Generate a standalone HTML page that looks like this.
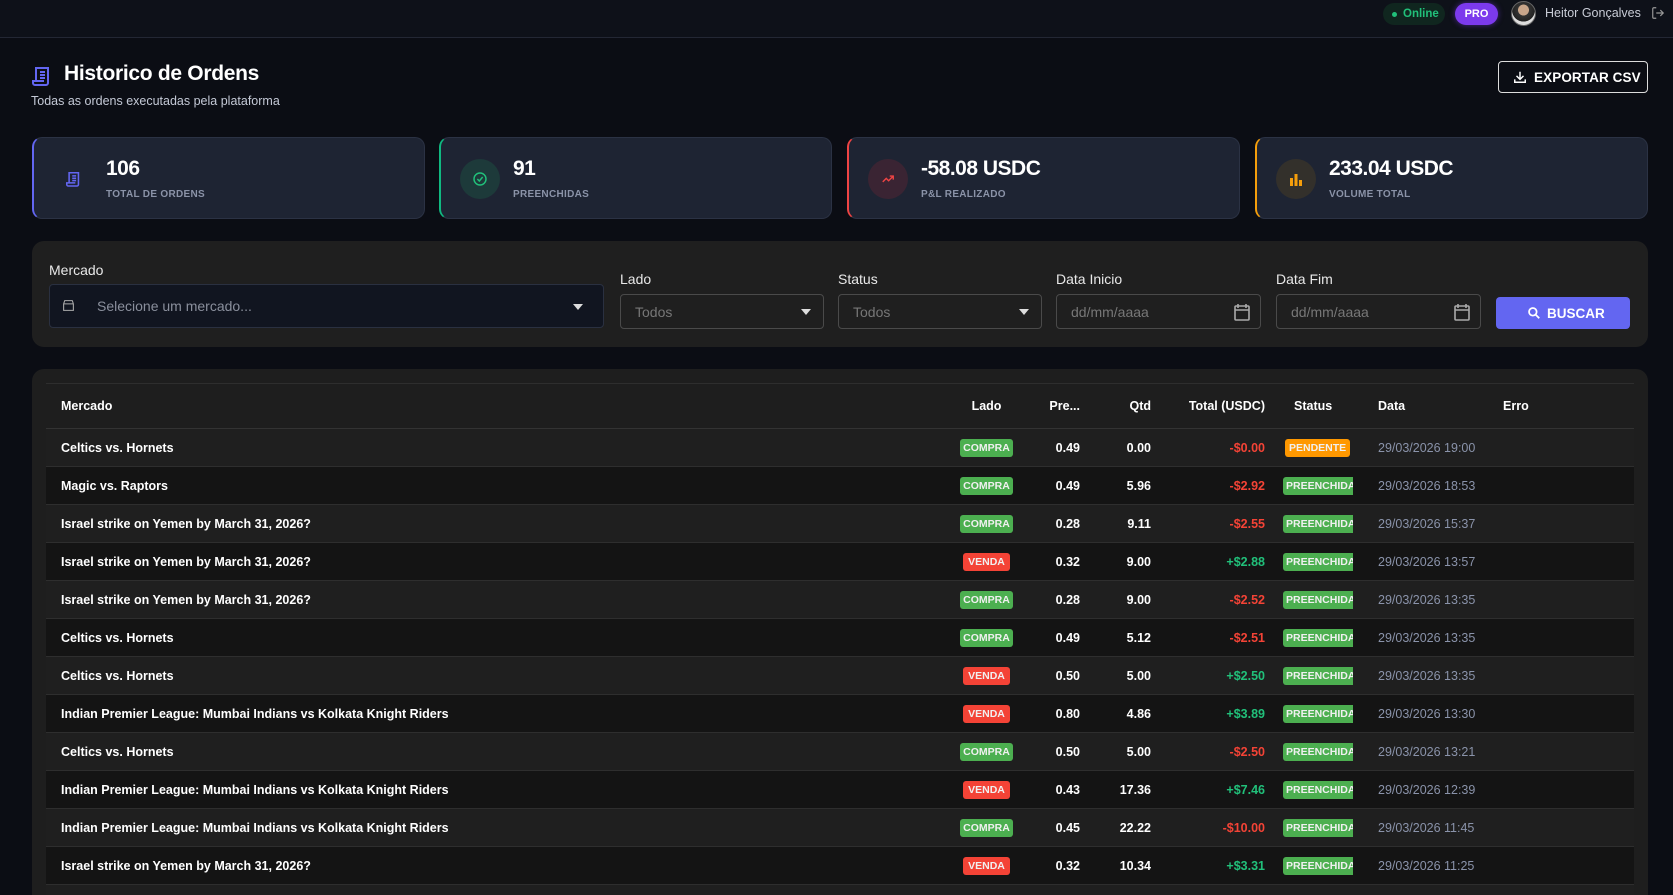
<!DOCTYPE html>
<html style="width:1673px;height:895px;overflow:hidden"><head><meta charset="utf-8"><style>
*{box-sizing:border-box;margin:0;padding:0}
body{width:1673px;height:895px;overflow:hidden;background:#0b0d14;font-family:"Liberation Sans",sans-serif;color:#fff;position:relative}
.top{position:absolute;left:0;top:0;width:1673px;height:38px;background:#0e1119;border-bottom:1px solid #232734}
.abs{position:absolute}
.card{position:absolute;top:137px;height:82px;width:393px;background:#1e2433;border:1px solid #2b3244;border-radius:10px}
.card .ic{position:absolute;left:19px;top:21px;width:40px;height:40px;border-radius:50%;display:flex;align-items:center;justify-content:center}
.card .v{position:absolute;left:72px;top:19px;font-size:21px;font-weight:bold;letter-spacing:-0.5px}
.card .l{position:absolute;left:72px;top:51px;font-size:10px;font-weight:bold;color:#8b93a8;letter-spacing:.3px}
.lab{position:absolute;font-size:14px;color:#e8e8e8}
.sel{position:absolute;height:35px;border:1px solid #4a4a4a;border-radius:4px;font-size:14px;color:#777;padding:9px 14px}
.tri{position:absolute;right:12px;top:14px;border-left:5px solid transparent;border-right:5px solid transparent;border-top:6px solid #ddd}
.panel{position:absolute;left:32px;top:369px;width:1616px;height:526px;background:#1e1e1e;border-radius:12px 12px 0 0;overflow:hidden}
table{position:absolute;left:14px;top:14px;width:1588px;border-collapse:collapse;font-size:13px;table-layout:fixed}
th{height:45px;text-align:left;font-weight:bold;font-size:12.5px;color:#fff;border-top:1px solid #2e2e2e;border-bottom:1px solid #333}
td{height:38px;border-bottom:1px solid #2e2e2e;font-weight:bold;font-size:12.5px;white-space:nowrap;overflow:hidden}
tr.o td{background:#1f1f1f}tr.e td{background:#141414}
thead tr th{background:#1e1e1e}
.b{display:inline-block;font-size:10.5px;font-weight:bold;padding:3px 3px;border-radius:3px;color:#f0f0f0}
.c{background:#4caf50}.vd{background:#f44336;padding:3px 5px}
.p{background:#ff9800;padding:3px 4px}
.f{background:#4caf50;width:70px;overflow:hidden;white-space:nowrap;border-radius:3px 0 0 3px;vertical-align:middle}
.r{text-align:right}.red{color:#f44336}.grn{color:#21c07a}
.dt{color:#8a93aa;font-weight:normal}
</style></head><body>
<div class="top"></div>
<div class="abs" style="left:1383px;top:3px;width:62px;height:22px;border-radius:11px;background:#10261f;color:#21c07a;font-size:11.5px;font-weight:bold;padding:5px 0 0 20px"><span style="position:absolute;left:9px;top:9px;width:5px;height:5px;border-radius:50%;background:#21c07a"></span>Online</div>
<div class="abs" style="left:1455px;top:3px;width:43px;height:22px;border-radius:11px;background:#7c3aed;font-size:11px;font-weight:bold;text-align:center;padding-top:5px;box-shadow:0 0 6px #7c3aed88">PRO</div>
<div class="abs" style="left:1511px;top:1px;width:25px;height:25px;border-radius:50%;background:radial-gradient(circle at 50% 35%,#c8a58a 0 28%,#333 30%,#222 60%,#ddd 62%);border:1px solid #666"></div>
<div class="abs" style="left:1545px;top:6px;font-size:12.5px;color:#c8ccd6">Heitor Gonçalves</div>
<svg class="abs" style="left:1651px;top:6px" width="14" height="14" viewBox="0 0 24 24" fill="none" stroke="#999" stroke-width="2"><path d="M9 21H5a2 2 0 0 1-2-2V5a2 2 0 0 1 2-2h4M16 17l5-5-5-5M21 12H9"/></svg>

<svg class="abs" style="left:32px;top:66px" width="18" height="20" viewBox="0 0 18 20" fill="none" stroke="#6366f1" stroke-width="2"><path d="M4 15V2h12v15a2 2 0 0 1-2 2H3a2 2 0 0 1-2-2v-2h11"/><path d="M8 6h5M8 9h5M8 12h5"/></svg>
<div class="abs" style="left:64px;top:62px;font-size:21px;font-weight:bold;letter-spacing:-0.3px">Historico de Ordens</div>
<div class="abs" style="left:31px;top:94px;font-size:12.5px;color:#c4c9d6">Todas as ordens executadas pela plataforma</div>
<div class="abs" style="left:1498px;top:61px;width:150px;height:32px;border:1px solid #ddd;border-radius:4px;font-size:13.5px;font-weight:bold;padding:8px 0 0 35px;letter-spacing:.1px">EXPORTAR CSV<svg style="position:absolute;left:14px;top:8px" width="14" height="14" viewBox="0 0 24 24" fill="none" stroke="#fff" stroke-width="2.5"><path d="M12 3v12M6 10l6 6 6-6M3 16v5h18v-5"/></svg></div>

<div class="card" style="left:32px;border-left:2px solid #6366f1"><div class="ic"><svg width="14" height="16" viewBox="0 0 18 20" fill="none" stroke="#6366f1" stroke-width="2"><path d="M4 15V2h12v15a2 2 0 0 1-2 2H3a2 2 0 0 1-2-2v-2h11"/><path d="M8 6h5M8 9h5M8 12h5"/></svg></div><div class="v">106</div><div class="l">TOTAL DE ORDENS</div></div>
<div class="card" style="left:439px;border-left:2px solid #10b981"><div class="ic" style="background:#1d3a3a"><svg width="16" height="16" viewBox="0 0 24 24" fill="none" stroke="#21c07a" stroke-width="2.2"><circle cx="12" cy="12" r="9"/><path d="M8 12l3 3 5-6"/></svg></div><div class="v">91</div><div class="l">PREENCHIDAS</div></div>
<div class="card" style="left:847px;border-left:2px solid #ef4444"><div class="ic" style="background:#3a2433"><svg width="16" height="14" viewBox="0 0 24 24" fill="none" stroke="#ef4444" stroke-width="2.4"><path d="M3 17l6-6 4 4 8-8M15 7h6v6"/></svg></div><div class="v">-58.08 USDC</div><div class="l">P&amp;L REALIZADO</div></div>
<div class="card" style="left:1255px;border-left:2px solid #f59e0b"><div class="ic" style="background:#33302b"><svg width="14" height="14" viewBox="0 0 14 14" fill="#f59e0b"><rect x="1" y="6" width="3" height="8"/><rect x="5.5" y="2" width="3" height="12"/><rect x="10" y="8" width="3" height="6"/></svg></div><div class="v">233.04 USDC</div><div class="l">VOLUME TOTAL</div></div>

<div class="abs" style="left:32px;top:241px;width:1616px;height:106px;background:#1f1f1f;border-radius:12px"></div>
<div class="lab" style="left:49px;top:262px">Mercado</div>
<div class="sel" style="left:49px;top:284px;width:555px;height:44px;background:#111520;border-color:#2a3040;padding:13px 0 0 47px;color:#8a8f9c">Selecione um mercado...<svg style="position:absolute;left:12px;top:14px" width="13" height="13" viewBox="0 0 24 24" fill="none" stroke="#aaa" stroke-width="2"><path d="M3 9l2-6h14l2 6M3 9v12h18V9M3 9h18"/></svg><div class="tri" style="right:20px;top:19px"></div></div>
<div class="lab" style="left:620px;top:271px">Lado</div>
<div class="sel" style="left:620px;top:294px;width:204px">Todos<div class="tri"></div></div>
<div class="lab" style="left:838px;top:271px">Status</div>
<div class="sel" style="left:838px;top:294px;width:204px">Todos<div class="tri"></div></div>
<div class="lab" style="left:1056px;top:271px">Data Inicio</div>
<div class="sel" style="left:1056px;top:294px;width:205px">dd/mm/aaaa<svg style="position:absolute;right:10px;top:8px" width="16" height="18" viewBox="0 0 16 18" fill="none" stroke="#aaa" stroke-width="1.6"><rect x="1" y="3" width="14" height="14" rx="1"/><path d="M4 1v4M12 1v4M1 7h14"/></svg></div>
<div class="lab" style="left:1276px;top:271px">Data Fim</div>
<div class="sel" style="left:1276px;top:294px;width:205px">dd/mm/aaaa<svg style="position:absolute;right:10px;top:8px" width="16" height="18" viewBox="0 0 16 18" fill="none" stroke="#aaa" stroke-width="1.6"><rect x="1" y="3" width="14" height="14" rx="1"/><path d="M4 1v4M12 1v4M1 7h14"/></svg></div>
<div class="abs" style="left:1496px;top:297px;width:134px;height:32px;background:#6366f1;border-radius:4px;font-size:13.5px;font-weight:bold;padding:9px 0 0 51px">BUSCAR<svg style="position:absolute;left:31px;top:9px" width="14" height="14" viewBox="0 0 24 24" fill="none" stroke="#fff" stroke-width="3"><circle cx="10" cy="10" r="6.5"/><path d="M15 15l6 6"/></svg></div>

<div class="panel">
<table>
<colgroup><col style="width:894px"><col style="width:83px"><col style="width:57px"><col style="width:71px"><col style="width:114px"><col style="width:93px"><col style="width:125px"><col style="width:151px"></colgroup>
<thead><tr><th style="padding-left:15px">Mercado</th><th style="text-align:center;padding-left:10px">Lado</th><th class="r">Pre...</th><th class="r">Qtd</th><th class="r">Total (USDC)</th><th style="padding-left:29px">Status</th><th style="padding-left:20px">Data</th><th style="padding-left:20px">Erro</th></tr></thead>
<tbody>
<tr class="o"><td style="padding-left:15px">Celtics vs. Hornets</td><td style="text-align:center;padding-left:10px"><span class="b c">COMPRA</span></td><td class="r">0.49</td><td class="r">0.00</td><td class="r red">-$0.00</td><td style="padding-left:20px"><span class="b p">PENDENTE</span></td><td class="dt" style="padding-left:20px">29/03/2026 19:00</td><td></td></tr>
<tr class="e"><td style="padding-left:15px">Magic vs. Raptors</td><td style="text-align:center;padding-left:10px"><span class="b c">COMPRA</span></td><td class="r">0.49</td><td class="r">5.96</td><td class="r red">-$2.92</td><td style="padding-left:18px"><span class="b f">PREENCHIDA</span></td><td class="dt" style="padding-left:20px">29/03/2026 18:53</td><td></td></tr>
<tr class="o"><td style="padding-left:15px">Israel strike on Yemen by March 31, 2026?</td><td style="text-align:center;padding-left:10px"><span class="b c">COMPRA</span></td><td class="r">0.28</td><td class="r">9.11</td><td class="r red">-$2.55</td><td style="padding-left:18px"><span class="b f">PREENCHIDA</span></td><td class="dt" style="padding-left:20px">29/03/2026 15:37</td><td></td></tr>
<tr class="e"><td style="padding-left:15px">Israel strike on Yemen by March 31, 2026?</td><td style="text-align:center;padding-left:10px"><span class="b vd">VENDA</span></td><td class="r">0.32</td><td class="r">9.00</td><td class="r grn">+$2.88</td><td style="padding-left:18px"><span class="b f">PREENCHIDA</span></td><td class="dt" style="padding-left:20px">29/03/2026 13:57</td><td></td></tr>
<tr class="o"><td style="padding-left:15px">Israel strike on Yemen by March 31, 2026?</td><td style="text-align:center;padding-left:10px"><span class="b c">COMPRA</span></td><td class="r">0.28</td><td class="r">9.00</td><td class="r red">-$2.52</td><td style="padding-left:18px"><span class="b f">PREENCHIDA</span></td><td class="dt" style="padding-left:20px">29/03/2026 13:35</td><td></td></tr>
<tr class="e"><td style="padding-left:15px">Celtics vs. Hornets</td><td style="text-align:center;padding-left:10px"><span class="b c">COMPRA</span></td><td class="r">0.49</td><td class="r">5.12</td><td class="r red">-$2.51</td><td style="padding-left:18px"><span class="b f">PREENCHIDA</span></td><td class="dt" style="padding-left:20px">29/03/2026 13:35</td><td></td></tr>
<tr class="o"><td style="padding-left:15px">Celtics vs. Hornets</td><td style="text-align:center;padding-left:10px"><span class="b vd">VENDA</span></td><td class="r">0.50</td><td class="r">5.00</td><td class="r grn">+$2.50</td><td style="padding-left:18px"><span class="b f">PREENCHIDA</span></td><td class="dt" style="padding-left:20px">29/03/2026 13:35</td><td></td></tr>
<tr class="e"><td style="padding-left:15px">Indian Premier League: Mumbai Indians vs Kolkata Knight Riders</td><td style="text-align:center;padding-left:10px"><span class="b vd">VENDA</span></td><td class="r">0.80</td><td class="r">4.86</td><td class="r grn">+$3.89</td><td style="padding-left:18px"><span class="b f">PREENCHIDA</span></td><td class="dt" style="padding-left:20px">29/03/2026 13:30</td><td></td></tr>
<tr class="o"><td style="padding-left:15px">Celtics vs. Hornets</td><td style="text-align:center;padding-left:10px"><span class="b c">COMPRA</span></td><td class="r">0.50</td><td class="r">5.00</td><td class="r red">-$2.50</td><td style="padding-left:18px"><span class="b f">PREENCHIDA</span></td><td class="dt" style="padding-left:20px">29/03/2026 13:21</td><td></td></tr>
<tr class="e"><td style="padding-left:15px">Indian Premier League: Mumbai Indians vs Kolkata Knight Riders</td><td style="text-align:center;padding-left:10px"><span class="b vd">VENDA</span></td><td class="r">0.43</td><td class="r">17.36</td><td class="r grn">+$7.46</td><td style="padding-left:18px"><span class="b f">PREENCHIDA</span></td><td class="dt" style="padding-left:20px">29/03/2026 12:39</td><td></td></tr>
<tr class="o"><td style="padding-left:15px">Indian Premier League: Mumbai Indians vs Kolkata Knight Riders</td><td style="text-align:center;padding-left:10px"><span class="b c">COMPRA</span></td><td class="r">0.45</td><td class="r">22.22</td><td class="r red">-$10.00</td><td style="padding-left:18px"><span class="b f">PREENCHIDA</span></td><td class="dt" style="padding-left:20px">29/03/2026 11:45</td><td></td></tr>
<tr class="e"><td style="padding-left:15px">Israel strike on Yemen by March 31, 2026?</td><td style="text-align:center;padding-left:10px"><span class="b vd">VENDA</span></td><td class="r">0.32</td><td class="r">10.34</td><td class="r grn">+$3.31</td><td style="padding-left:18px"><span class="b f">PREENCHIDA</span></td><td class="dt" style="padding-left:20px">29/03/2026 11:25</td><td></td></tr>
<tr class="o"><td style="padding-left:15px">&nbsp;</td><td></td><td></td><td></td><td></td><td></td><td></td><td></td></tr>
</tbody></table>
</div>
</body></html>
